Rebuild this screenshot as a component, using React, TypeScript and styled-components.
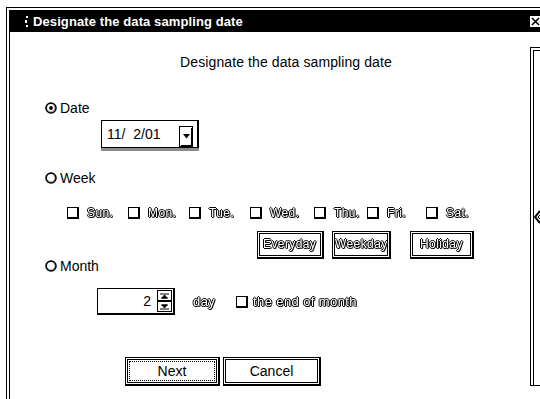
import React from 'react';
import styled, { createGlobalStyle } from 'styled-components';

const GlobalStyle = createGlobalStyle`
  * {
    box-sizing: border-box;
  }
  html, body {
    margin: 0;
    padding: 0;
    background: #fff;
    overflow: hidden;
  }
  body {
    font-family: 'Liberation Sans', Arial, sans-serif;
    color: #000;
  }
`;

const Frame = styled.div`
  margin: 7px 0 0 6px;
  width: 543px;
  height: 400px;
  border: 1px solid #000;
  padding: 2px;
  background: #fff;
`;

const Inner = styled.div`
  height: 100%;
  border: 1px solid #000;
  display: flex;
  flex-direction: column;
`;

const TitleBar = styled.div`
  height: 21px;
  flex-shrink: 0;
  background: #000;
  color: #fff;
  display: flex;
  align-items: center;
  gap: 5px;
  padding: 0 3px 0 15px;
  font-size: 13px;
  font-weight: bold;
  letter-spacing: 0.1px;
`;

const CloseBox = styled.span`
  margin-left: auto;
  width: 13px;
  height: 13px;
  background: #fff;
  border: 1px solid #000;
  display: flex;
  align-items: center;
  justify-content: center;
`;

const Body = styled.div`
  flex: 1;
  display: flex;
`;

const Main = styled.div`
  width: 520px;
  flex-shrink: 0;
  display: flex;
  flex-direction: column;
`;

const SidePanel = styled.div`
  flex: 1;
  margin-top: 15px;
  height: 339px;
  border: 1px solid #000;
  box-shadow: inset 2px 2px 0 #fff, inset 3px 3px 0 #000;
  display: flex;
  align-items: center;
  padding-left: 3px;
`;

const Heading = styled.div`
  margin-top: 22px;
  padding-left: 32px;
  text-align: center;
  font-size: 14px;
  line-height: 16px;
  letter-spacing: 0.1px;
`;

const OptionRow = styled.label<{ $top: number }>`
  margin-top: ${p => p.$top}px;
  padding-left: 35px;
  height: 16px;
  display: flex;
  align-items: center;
  gap: 3px;
  font-size: 14px;
`;

const Combo = styled.div`
  margin: 4px 0 0 91px;
  width: 98px;
  height: 28px;
  border: 1px solid #000;
  border-right-width: 2px;
  box-shadow: 0 3px 0 #8c8c8c;
  display: flex;
`;

const ComboText = styled.span`
  flex: 1;
  align-self: center;
  padding-left: 5px;
  font-size: 14px;
`;

const DropButton = styled.span`
  align-self: flex-end;
  margin-right: 4px;
  width: 14px;
  height: 21px;
  border: 1px solid #000;
  box-shadow: inset 1px 1px 0 #fff, inset -1px -1px 0 #000;
  display: flex;
  align-items: center;
  justify-content: center;
`;

const DayRow = styled.div`
  margin-top: 19px;
  padding-left: 57px;
  height: 16px;
  display: flex;
  align-items: center;
`;

const CheckItem = styled.label<{ $width?: number }>`
  width: ${p => (p.$width ? `${p.$width}px` : 'auto')};
  flex-shrink: 0;
  display: flex;
  align-items: center;
  gap: 8px;
`;

const Box = styled.span`
  width: 12px;
  height: 12px;
  background: #fff;
  border: 1px solid #000;
  border-right-width: 2px;
  border-bottom-width: 2px;
  flex-shrink: 0;
`;

const Embossed = styled.span<{ $size?: number }>`
  display: inline-block;
  font-size: ${p => p.$size ?? 13}px;
  line-height: 15px;
  color: #fff;
  letter-spacing: 0.4px;
  text-shadow:
    1px 0 0 #000,
    -1px 0 0 #000,
    0 1px 0 #000,
    0 -1px 0 #000,
    1px 1px 0 #555;
  white-space: nowrap;
  will-change: transform;
`;

const PresetRow = styled.div`
  margin-top: 10px;
  padding-left: 247px;
  display: flex;
`;

const Button = styled.button<{ $width: number; $offset?: number; $height?: number }>`
  width: ${p => p.$width}px;
  height: ${p => p.$height ?? 28}px;
  margin: 0 0 0 ${p => p.$offset ?? 0}px;
  padding: 3px;
  background: #fff;
  border: 1px solid #000;
  border-right-width: 2px;
  border-bottom-width: 2px;
  box-shadow: inset 0 0 0 1px #fff, inset 0 0 0 2px #000;
  display: flex;
  align-items: center;
  justify-content: center;
  font-family: 'Liberation Sans', Arial, sans-serif;
  font-size: 14px;
  color: #000;
  cursor: default;
`;

const FocusRing = styled.span`
  flex: 1;
  align-self: stretch;
  border: 1px dotted #000;
  display: flex;
  align-items: center;
  justify-content: center;
`;

const SpinRow = styled.div`
  margin-top: 14px;
  padding-left: 87px;
  display: flex;
  align-items: center;
`;

const SpinBox = styled.div`
  width: 78px;
  height: 27px;
  background: #fff;
  border: 1px solid #000;
  border-right-width: 2px;
  border-bottom-width: 2px;
  display: flex;
`;

const SpinValue = styled.span`
  flex: 1;
  padding: 4px 6px 0 0;
  text-align: right;
  font-size: 14px;
  line-height: 16px;
`;

const SpinButtons = styled.div`
  width: 15px;
  margin: 1px 1px 1px 0;
  display: flex;
  flex-direction: column;
`;

const SpinButton = styled.span`
  flex: 1;
  border: 1px solid #000;
  display: flex;
  align-items: center;
  justify-content: center;
`;

const DayLabel = styled.span`
  margin: 0 21px 0 18px;
  display: flex;
`;

const EndCheck = styled.label`
  display: flex;
  align-items: center;
  gap: 5px;
`;

const ActionRow = styled.div`
  margin-top: 42px;
  padding-left: 115px;
  display: flex;
  gap: 3px;
`;

const Radio: React.FC<{ checked?: boolean }> = ({ checked }) => (
  <svg width="12" height="12" viewBox="0 0 12 12">
    <circle cx="6" cy="6" r="4.9" fill="#fff" stroke="#000" strokeWidth="1.8" />
    <path d="M8.7 3.3 A3.8 3.8 0 0 1 3.3 8.7" fill="none" stroke="#9a9a9a" strokeWidth="1" />
    {checked && <circle cx="6" cy="6" r="1.9" fill="#000" />}
  </svg>
);

const days: [string, number | undefined][] = [
  ['Sun.', 61],
  ['Mon.', 61],
  ['Tue.', 61],
  ['Wed.', 64],
  ['Thu.', 53],
  ['Fri.', 59],
  ['Sat.', undefined],
];

export default function App() {
  return (
    <>
      <GlobalStyle />
      <Frame>
        <Inner>
          <TitleBar>
            <svg width="3" height="11" viewBox="0 0 3 11">
              <rect x="1" y="0" width="2" height="2" fill="#fff" />
              <rect x="0" y="4" width="2" height="3" fill="#fff" />
              <rect x="1" y="9" width="2" height="2" fill="#fff" />
            </svg>
            <span>Designate the data sampling date</span>
            <CloseBox>
              <svg width="9" height="9" viewBox="0 0 9 9">
                <path d="M1 1 L8 8 M8 1 L1 8" stroke="#000" strokeWidth="1.6" />
              </svg>
            </CloseBox>
          </TitleBar>
          <Body>
            <Main>
              <Heading>Designate the data sampling date</Heading>

              <OptionRow $top={30}>
                <Radio checked />
                Date
              </OptionRow>
              <Combo>
                <ComboText>11/&nbsp;&nbsp;2/01</ComboText>
                <DropButton>
                  <svg width="7" height="5" viewBox="0 0 7 5">
                    <path d="M0 0 H7 L3.5 4.5 Z" fill="#000" />
                  </svg>
                </DropButton>
              </Combo>

              <OptionRow $top={22}>
                <Radio />
                Week
              </OptionRow>
              <DayRow>
                {days.map(([name, width]) => (
                  <CheckItem key={name} $width={width}>
                    <Box />
                    <Embossed $size={12}>{name}</Embossed>
                  </CheckItem>
                ))}
              </DayRow>
              <PresetRow>
                <Button $width={67}>
                  <Embossed $size={12}>Everyday</Embossed>
                </Button>
                <Button $width={59} $offset={8}>
                  <Embossed $size={12}>Weekday</Embossed>
                </Button>
                <Button $width={64} $offset={19}>
                  <Embossed $size={12}>Holiday</Embossed>
                </Button>
              </PresetRow>

              <OptionRow $top={-1}>
                <Radio />
                Month
              </OptionRow>
              <SpinRow>
                <SpinBox>
                  <SpinValue>2</SpinValue>
                  <SpinButtons>
                    <SpinButton>
                      <svg width="9" height="6" viewBox="0 0 9 6">
                        <path d="M0 1 H9 M1 5 H8 M4.5 2 L2 5 H7 Z" stroke="#000" strokeWidth="1" fill="#000" />
                      </svg>
                    </SpinButton>
                    <SpinButton>
                      <svg width="9" height="6" viewBox="0 0 9 6">
                        <path d="M1 1 H8 M0 5 H9 M2 1 L4.5 4 L7 1 Z" stroke="#000" strokeWidth="1" fill="#000" />
                      </svg>
                    </SpinButton>
                  </SpinButtons>
                </SpinBox>
                <DayLabel>
                  <Embossed>day</Embossed>
                </DayLabel>
                <EndCheck>
                  <Box />
                  <Embossed>the end of month</Embossed>
                </EndCheck>
              </SpinRow>

              <ActionRow>
                <Button $width={95} $height={29}>
                  <FocusRing>Next</FocusRing>
                </Button>
                <Button $width={98} $height={29}>
                  Cancel
                </Button>
              </ActionRow>
            </Main>
            <SidePanel>
              <svg width="7" height="14" viewBox="0 0 7 14">
                <path d="M6 1 L1 7 L6 13" fill="none" stroke="#000" strokeWidth="2" />
                <path d="M7 4 L4 7 L7 10" fill="none" stroke="#000" strokeWidth="1" />
              </svg>
            </SidePanel>
          </Body>
        </Inner>
      </Frame>
    </>
  );
}
